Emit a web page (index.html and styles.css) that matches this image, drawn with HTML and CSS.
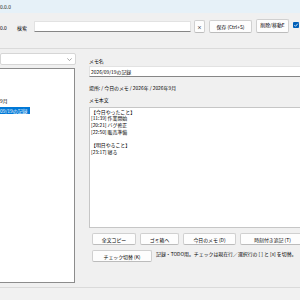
FILE: index.html
```html
<!DOCTYPE html>
<html lang="ja">
<head>
<meta charset="utf-8">
<link rel="stylesheet" href="styles.css">
</head>
<body>
<div class="title">0.0.0</div>
<div class="toolbar">
  <span class="ver">0.0</span>
  <span class="lbl-search">検索</span>
  <div class="search"></div>
  <div class="btn btn-x">×</div>
  <div class="btn btn-save">保存 (Ctrl+S)</div>
  <div class="btn btn-del">削除/移動E</div>
  <div class="check"><svg width="6" height="6" viewBox="0 0 6 6"><rect x="0" y="0" width="6" height="6" rx="1" fill="#005fb8"/><path d="M1.3 3.1 L2.5 4.3 L4.8 1.7" fill="none" stroke="#fff" stroke-width="0.8"/></svg></div>
</div>
<div class="main">
  <div class="left">
    <div class="combo"><svg class="chev" width="5" height="3" viewBox="0 0 5 3"><path d="M0.3 0.4 L2.5 2.5 L4.7 0.4" fill="none" stroke="#707070" stroke-width="0.6"/></svg></div>
    <div class="list">
      <div class="item"><span>9月</span></div>
      <div class="item sel"><span>09/19の記録</span></div>
    </div>
  </div>
  <div class="right">
    <div class="label">メモ名</div>
    <div class="input">2026/09/19の記録</div>
    <div class="path">場所: / 今日のメモ / 2026年 / 2026年9月</div>
    <div class="label label2">メモ本文</div>
    <div class="memo">【今日やったこと】<br>[11:39] 作業開始<br>[20:21] バグ修正<br>[22:50] 販売準備<br><br>【明日やること】<br>[23:17] 寝る</div>
    <div class="row1">
      <div class="btn b-copy">全文コピー</div>
      <div class="btn b-trash">ゴミ箱へ</div>
      <div class="btn b-today">今日のメモ (D)</div>
      <div class="btn b-time">時刻付き追記 (T)</div>
    </div>
    <div class="row2">
      <div class="btn b-check">チェック切替 (K)</div>
      <div class="hint">記録・TODO用。チェックは現在行／選択行の [ ] と [x] を切替。</div>
    </div>
  </div>
</div>
<div class="status"></div>
</body>
</html>
```
FILE: styles.css
```css
html, body {
  margin: 0;
  padding: 0;
}
body {
  width: 300px;
  height: 300px;
  overflow: hidden;
  background: #f0f0f0;
  font-family: "Noto Sans CJK JP", "Noto Sans", sans-serif;
  font-size: 4.9px;
  line-height: 7px;
  color: #000;
}
.title {
  height: 13px;
  background: #e6f1f8;
  line-height: 13px;
  color: #222;
}
.toolbar {
  box-sizing: border-box;
  height: 36px;
  border-bottom: 1px solid #dadada;
  display: flex;
  align-items: flex-start;
  padding-top: 6px;
  white-space: nowrap;
}
.ver {
  width: 17px;
  margin-top: 5px;
}
.lbl-search {
  width: 17px;
  margin-top: 5px;
}
.search {
  box-sizing: border-box;
  width: 157px;
  height: 11px;
  margin-top: 2px;
  background: #fff;
  border: 1px solid #e2e2e2;
  border-bottom: 1px solid #868686;
  border-radius: 1px;
}
.btn {
  box-sizing: border-box;
  background: #fdfdfd;
  border: 1px solid #d0d0d0;
  border-bottom-color: #bcbcbc;
  border-radius: 2px;
  display: flex;
  align-items: center;
  justify-content: center;
  white-space: nowrap;
  flex: none;
}
.btn-x {
  width: 11px;
  height: 13px;
  margin-top: 1px;
  margin-left: 3px;
}
.btn-save {
  width: 43px;
  height: 13px;
  margin-top: 1px;
  margin-left: 4px;
}
.btn-del {
  width: 33px;
  height: 14px;
  margin-left: 4px;
  align-items: flex-start;
  padding-top: 1px;
}
.check {
  width: 6px;
  height: 6px;
  margin-left: 4px;
  margin-top: 3px;
  display: flex;
}
.main {
  height: 238px;
  display: flex;
}
.left {
  width: 76px;
  padding-top: 4px;
  flex: none;
}
.combo {
  box-sizing: border-box;
  height: 12px;
  width: 76px;
  background: #fff;
  border: 1px solid #d6d6d6;
  border-radius: 2px;
  display: flex;
  align-items: center;
  justify-content: flex-end;
  padding-right: 3px;
}
.list {
  box-sizing: border-box;
  width: 75px;
  height: 215px;
  margin-top: 3px;
  background: #fff;
  border: 1px solid #8c8c8c;
  border-left: none;
  padding-top: 26px;
}
.item {
  height: 10px;
}
.item span {
  display: inline-block;
  line-height: 7px;
  margin-top: 1.5px;
  padding-right: 1px;
  white-space: nowrap;
}
.item.sel span {
  background: #0078d7;
  color: #fff;
  width: 29px;
  overflow: hidden;
}
.right {
  width: 222px;
  margin-left: 13px;
  padding-top: 8px;
  flex: none;
}
.label {
  height: 7px;
}
.label2 {
  margin-top: 5px;
}
.input {
  box-sizing: border-box;
  height: 11px;
  margin-top: 2px;
  background: #fff;
  border: 1px solid #e2e2e2;
  border-bottom: 1px solid #868686;
  padding-left: 1px;
  line-height: 9px;
  white-space: nowrap;
}
.path {
  margin-top: 7px;
  height: 7px;
  white-space: nowrap;
}
.memo {
  box-sizing: border-box;
  height: 121px;
  margin-top: 4px;
  background: #fff;
  border: 1px solid #c6c6c6;
  padding: 0.5px 1px;
  line-height: 6.7px;
}
.row1, .row2 {
  display: flex;
  gap: 4px;
  padding-left: 3px;
  margin-top: 5px;
  align-items: flex-start;
}
.row1 .btn, .row2 .btn {
  height: 12px;
}
.b-copy { width: 44px; }
.b-trash { width: 39px; }
.b-today { width: 53px; }
.b-time { width: 65px; }
.b-check { width: 60px; }
.hint {
  white-space: nowrap;
  line-height: 7px;
}
.status {
  box-sizing: border-box;
  height: 13px;
  border-top: 1px solid #dadada;
  background: #f1f1f1;
}
```
